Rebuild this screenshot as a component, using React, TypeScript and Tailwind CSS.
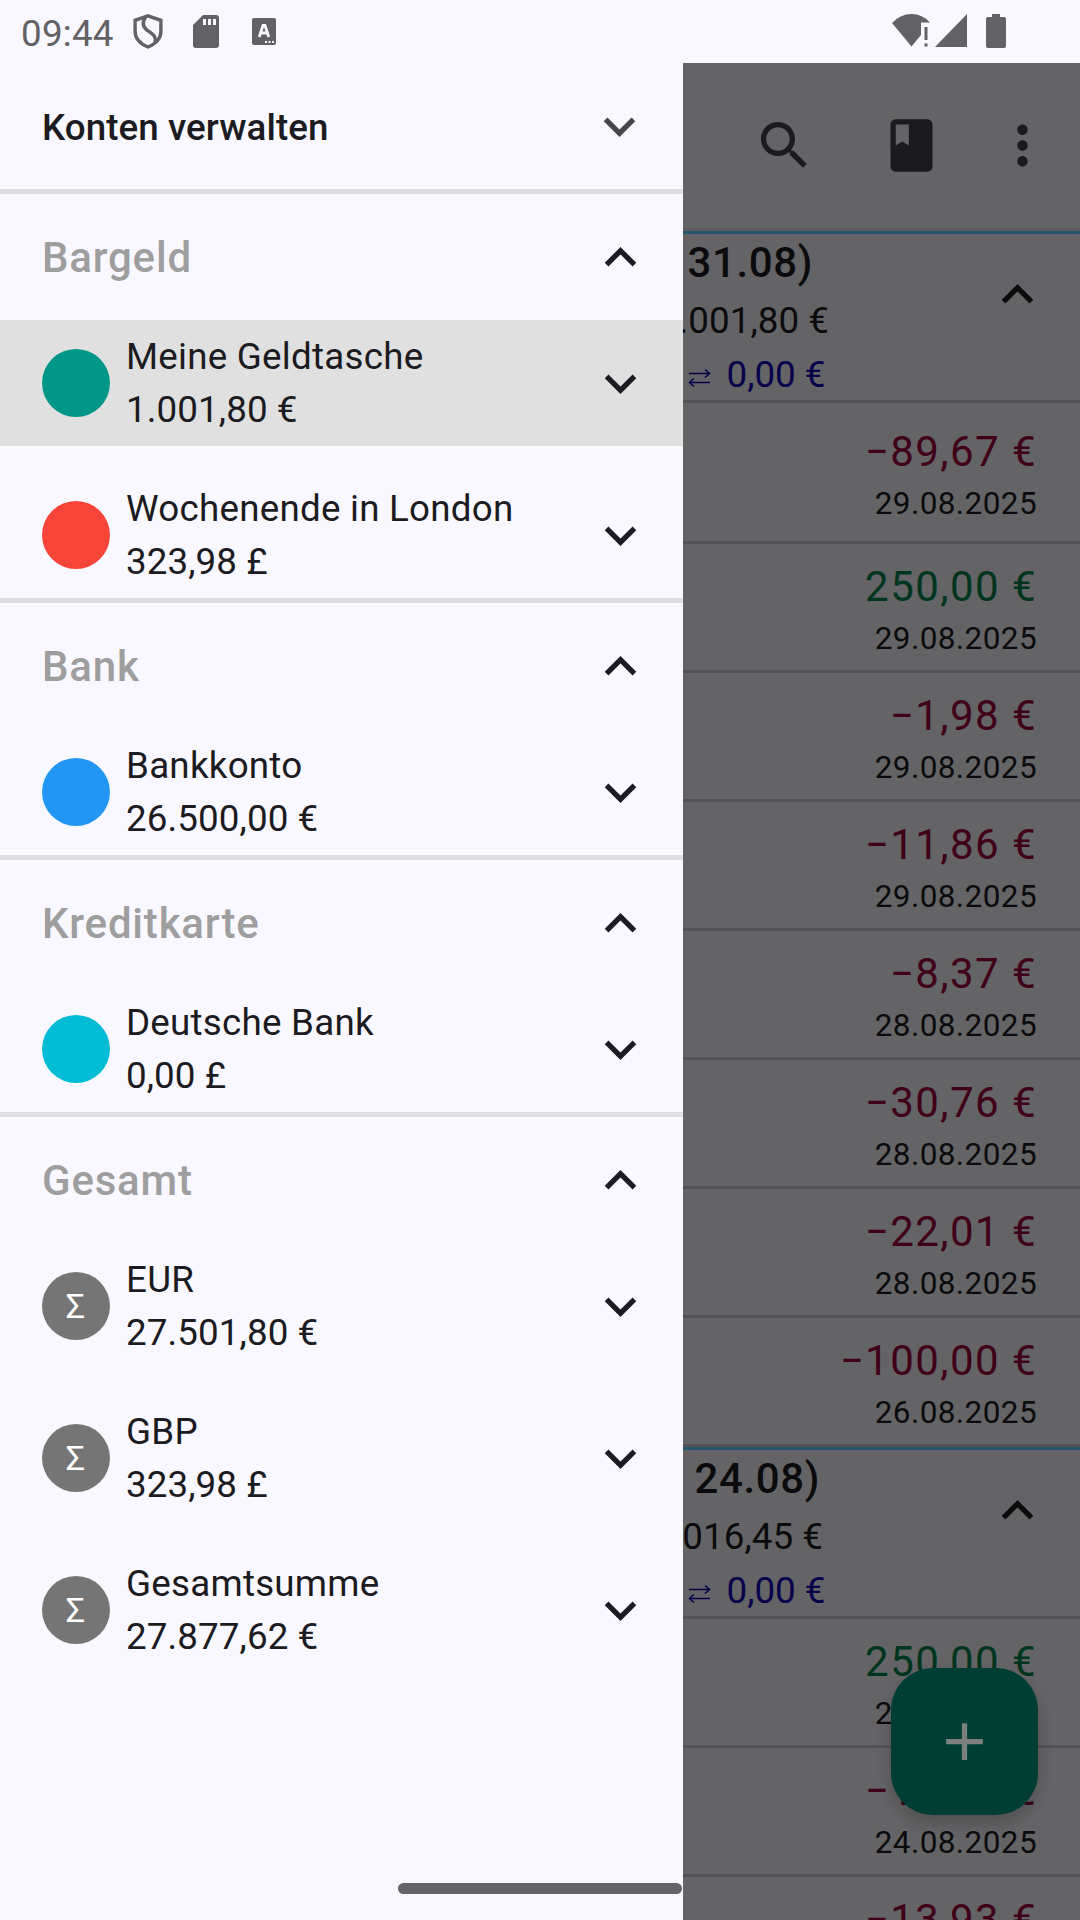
import {
  MdAdd,
  MdClass,
  MdExpandLess,
  MdExpandMore,
  MdMoreVert,
  MdSearch,
} from "react-icons/md";

interface Account {
  name: string;
  balance: string;
  color: string;
  selected?: boolean;
  total?: boolean;
}

interface AccountGroup {
  title: string;
  accounts: Account[];
}

interface Transaction {
  amount: string;
  date: string;
}

const GROUPS: AccountGroup[] = [
  {
    title: "Bargeld",
    accounts: [
      { name: "Meine Geldtasche", balance: "1.001,80 €", color: "bg-[#009688]", selected: true },
      { name: "Wochenende in London", balance: "323,98 £", color: "bg-[#f64438]" },
    ],
  },
  {
    title: "Bank",
    accounts: [{ name: "Bankkonto", balance: "26.500,00 €", color: "bg-[#2296f3]" }],
  },
  {
    title: "Kreditkarte",
    accounts: [{ name: "Deutsche Bank", balance: "0,00 £", color: "bg-[#00bcd5]" }],
  },
  {
    title: "Gesamt",
    accounts: [
      { name: "EUR", balance: "27.501,80 €", color: "bg-[#757575]", total: true },
      { name: "GBP", balance: "323,98 £", color: "bg-[#757575]", total: true },
      { name: "Gesamtsumme", balance: "27.877,62 €", color: "bg-[#757575]", total: true },
    ],
  },
];

const WEEK_35: Transaction[] = [
  { amount: "−89,67 €", date: "29.08.2025" },
  { amount: "250,00 €", date: "29.08.2025" },
  { amount: "−1,98 €", date: "29.08.2025" },
  { amount: "−11,86 €", date: "29.08.2025" },
  { amount: "−8,37 €", date: "28.08.2025" },
  { amount: "−30,76 €", date: "28.08.2025" },
  { amount: "−22,01 €", date: "28.08.2025" },
  { amount: "−100,00 €", date: "26.08.2025" },
];

const WEEK_34: Transaction[] = [
  { amount: "250,00 €", date: "24.08.2025" },
  { amount: "−14,22 €", date: "24.08.2025" },
  { amount: "−13,93 €", date: "24.08.2025" },
];

function StatusBar() {
  return (
    <div className="flex h-[63px] shrink-0 items-start bg-[#f9f8ff] text-[#626265]">
      <span className="ml-[21px] mt-[12px] w-[112px] text-[36.75px] leading-[43px] tracking-[0.25px]">09:44</span>
      <svg className="mt-[14px] h-[35px] w-[30px]" viewBox="0 0 30 35" fill="none" stroke="currentColor" strokeWidth="3.400">
        <path d="M15 1.900 27.900 6.300V17c0 7.500-5 12.800-12.900 16C7 29.800 2.100 24.500 2.100 17V6.300Z" />
        <path d="M13 2.500C9 8 9.500 12.500 14 16.200C19.500 20 23.500 22 22 28" />
      </svg>
      <svg className="ml-[30px] mt-[15px] h-[33px] w-[26px]" viewBox="0 0 26 33">
        <path
          fill="currentColor"
          fillRule="evenodd"
          d="M10 0h13q3 0 3 3v27q0 3-3 3H3q-3 0-3-3V10ZM10 4v6h3V4Zm5 0v6h3V4Zm5 0v6h3V4Z"
        />
      </svg>
      <svg className="ml-[33px] mt-[18px] h-[27px] w-[24px]" viewBox="0 0 24 27">
        <rect width="24" height="27" rx="2" fill="currentColor" />
        <path d="M7.200 19 11 7.500H13L16.800 19M8.800 15h6.400" fill="none" stroke="#f9f8ff" strokeWidth="2.800" />
        <path d="M13 24h2M16.500 24h2M20 24h2" stroke="#f9f8ff" strokeWidth="2" />
      </svg>
      <svg className="ml-auto mt-[14px] h-[34px] w-[38px]" viewBox="0 0 38 34" fill="currentColor">
        <path d="M0 9Q8.500 0 19.500 0T38 8.500H29V21L19.500 32.500Z" />
        <path d="M32.500 13h3v13h-3zM32.500 29.500h3v3h-3z" />
      </svg>
      <svg className="ml-[5px] mt-[14px] h-[33px] w-[32px]" viewBox="0 0 32 33" fill="currentColor">
        <path d="M32 0V33H0Z" />
      </svg>
      <svg className="ml-[19px] mr-[74px] mt-[14px] h-[34px] w-[20px]" viewBox="0 0 20 34" fill="currentColor">
        <path d="M6 0h8v3h4q2 0 2 2v27q0 2-2 2H2q-2 0-2-2V5q0-2 2-2h4Z" />
      </svg>
    </div>
  );
}

function AccountRow({ account }: { account: Account }) {
  return (
    <div className={`flex h-[126px] items-center pl-[42px] pr-[31px] ${account.selected ? "bg-[#e0e0e0]" : ""}`}>
      <div
        className={`flex size-[68px] items-center justify-center rounded-full pr-px text-[34px] text-white ${account.color}`}
      >
        {account.total && "Σ"}
      </div>
      <div className="ml-[16px] flex-1 pt-px text-[36.75px]">
        <div className="h-[53px] leading-[52px] tracking-[0.24px]">{account.name}</div>
        <div className="h-[52px] leading-[51px] tracking-[0.1px]">{account.balance}</div>
      </div>
      <MdExpandMore className="size-[63px]" />
    </div>
  );
}

function Drawer() {
  return (
    <aside className="w-[683px] shrink-0 bg-[#f9f8ff] text-[#1b1b21]">
      <div className="flex h-[126px] items-center justify-between pl-[42px] pr-[32px]">
        <span className="pt-[3px] text-[36.75px] font-medium tracking-[0.07px]">Konten verwalten</span>
        <MdExpandMore className="size-[63px] text-[#46464b]" />
      </div>
      {GROUPS.map((group) => (
        <section key={group.title} className="border-t-[5px] border-[#dfdee3]">
          <div className="flex h-[126px] items-center justify-between pl-[42px] pr-[31px]">
            <span className="text-[42px] font-medium tracking-[0.8px] text-[#9e9e9f]">{group.title}</span>
            <MdExpandLess className="size-[63px]" />
          </div>
          <div className="flex flex-col gap-[26px]">
            {group.accounts.map((account) => (
              <AccountRow key={account.name} account={account} />
            ))}
          </div>
        </section>
      ))}
    </aside>
  );
}

function TransactionRow({ tx, tall }: { tx: Transaction; tall?: boolean }) {
  return (
    <div
      className={`flex shrink-0 flex-col items-end justify-center border-b-[3px] border-[#535356] pr-[43px] ${tall ? "h-[141px]" : "h-[129px]"}`}
    >
      <div
        className={`text-[42px] leading-[63px] tracking-[1.45px] ${tx.amount.startsWith("−") ? "text-[#3f0018]" : "text-[#00351d]"}`}
      >
        {tx.amount}
      </div>
      <div className="text-[31.5px] leading-[42px] tracking-[0.4px]">{tx.date}</div>
    </div>
  );
}

interface WeekHeaderProps {
  range: string;
  sum: string;
  rangeWidth: string;
  sumWidth: string;
}

function WeekHeader({ range, sum, rangeWidth, sumWidth }: WeekHeaderProps) {
  return (
    <div className="flex h-[172px] shrink-0 justify-between border-b-[3px] border-t-[3px] border-b-[#535356] border-t-[#26586b] pr-[31px]">
      <div className="flex flex-col">
        <div className={`flex h-[59px] justify-end whitespace-nowrap text-[42px] font-medium leading-[58px] tracking-[0.6px] ${rangeWidth}`}>
          {range}
        </div>
        <div className={`flex h-[53px] justify-end whitespace-nowrap text-[36.75px] leading-[55px] tracking-[0.05px] ${sumWidth}`}>
          {sum}
        </div>
        <div className="flex h-[54px] w-[142.500px] items-center justify-end whitespace-nowrap text-[36.75px] leading-[54px] text-[#06004a]">
          <svg className="mr-[16px] mt-[9px] h-[20px] w-[23px]" viewBox="0 0 23 20" fill="none" stroke="currentColor" strokeWidth="1.500">
            <path d="M1 5.500H21M17 1.500 21.500 5.500 17 9.500M22 14.500H2M6 10.500 1.500 14.500 6 18.500" />
          </svg>
          <span className="pt-[4px]">0,00 €</span>
        </div>
      </div>
      <MdExpandLess className="mt-[29px] size-[63px] text-[#0b0b0d]" />
    </div>
  );
}

function TransactionList() {
  return (
    <main className="flex h-full flex-1 flex-col overflow-hidden bg-[#646466] text-[#0b0b0d]">
      <div className="flex h-[168px] shrink-0 items-center border-b-[3px] border-[#5d5d62] pl-[70px] text-[#1b1b1f]">
        <MdSearch className="size-[63px]" />
        <MdClass className="ml-[64px] size-[63px]" />
        <MdMoreVert className="ml-[48px] size-[63px]" />
      </div>
      <WeekHeader range="31.08)" sum=".001,80 €" rangeWidth="w-[130px]" sumWidth="w-[146px]" />
      {WEEK_35.map((tx, i) => (
        <TransactionRow key={i} tx={tx} tall={i === 0} />
      ))}
      <WeekHeader range="24.08)" sum="016,45 €" rangeWidth="w-[137px]" sumWidth="w-[140px]" />
      {WEEK_34.map((tx, i) => (
        <TransactionRow key={i} tx={tx} />
      ))}
    </main>
  );
}

export default function App() {
  return (
    <div className="relative flex h-[1920px] w-[1080px] flex-col overflow-hidden font-[Roboto,sans-serif]">
      <StatusBar />
      <div className="flex h-[1857px]">
        <Drawer />
        <TransactionList />
      </div>
      {/* Floating action button */}
      <button className="absolute left-[891px] top-[1668px] flex size-[147px] items-center justify-center rounded-[42px] bg-[#003d35] text-[#7b807f] shadow-[0_8px_16px_rgba(0,0,0,0.2)]">
        <MdAdd className="size-[63px]" />
      </button>
      {/* Gesture bar */}
      <div className="absolute left-[398px] top-[1883px] h-[11px] w-[284px] rounded-full bg-[#646466]" />
    </div>
  );
}
